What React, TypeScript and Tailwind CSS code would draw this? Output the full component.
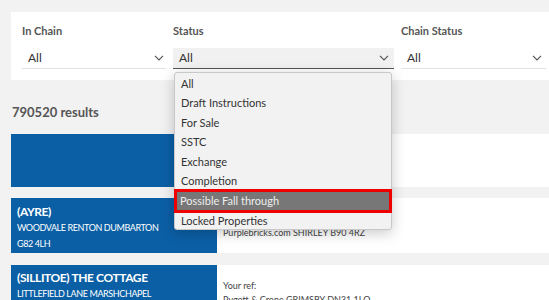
import React from "react";

const Chevron = () => (
  <svg width="10" height="6" viewBox="0 0 10 6" fill="none" className="shrink-0">
    <path d="M1 0.8 L5 4.8 L9 0.8" stroke="#555" strokeWidth="1.2" />
  </svg>
);

const items = [
  "All",
  "Draft Instructions",
  "For Sale",
  "SSTC",
  "Exchange",
  "Completion",
  "Possible Fall through",
  "Locked Properties",
];

export default function App() {
  return (
    <div
      className="relative w-[549px] h-[300px] overflow-hidden bg-[#f2f2f2] text-[#333]"
      style={{ fontFamily: "Lato, 'Open Sans', sans-serif" }}
    >
      <div className="pt-[12px] pl-[11px]">
        <div className="bg-white h-[68px] pt-[13px] pl-[11px] flex gap-[7px]">
          <div className="w-[144px] flex flex-col">
            <div className="text-[11px] font-bold text-[#555] h-[23px] leading-[11px]">In Chain</div>
            <div className="h-[21px] border-b border-[#e2e2e2] flex items-center justify-between pl-[6px] pr-[2px] text-[12px]">
              <span>All</span>
              <Chevron />
            </div>
          </div>
          <div className="w-[221px] flex flex-col">
            <div className="text-[11px] font-bold text-[#555] h-[23px] leading-[11px]">Status</div>
            <div className="h-[21px] bg-[#f1f1f1] border-b border-[#555] flex items-center justify-between pl-[6px] pr-[5px] text-[12px]">
              <span>All</span>
              <Chevron />
            </div>
          </div>
          <div className="w-[145px] flex flex-col">
            <div className="text-[11px] font-bold text-[#555] h-[23px] leading-[11px]">Chain Status</div>
            <div className="h-[21px] border-b border-[#e2e2e2] flex items-center justify-between pl-[6px] pr-[4px] text-[12px]">
              <span>All</span>
              <Chevron />
            </div>
          </div>
        </div>

        <div className="h-[54px] pt-[24px] text-[13px] leading-[16px] font-bold text-[#555] pl-[1px]">
          790520 results
        </div>

        <div className="flex h-[53px]">
          <div className="w-[206px] bg-[#0b5fa5]" />
          <div className="flex-1 bg-white" />
        </div>

        <div className="flex h-[55px] mt-[11px]">
          <div className="w-[206px] bg-[#0b5fa5] text-white pl-[6px] pt-[6px]">
            <div className="text-[12px] tracking-[-0.4px] font-bold leading-[16px]">(AYRE)</div>
            <div className="text-[9px] tracking-[-0.4px] leading-[16px]">WOODVALE RENTON DUMBARTON</div>
            <div className="text-[9px] tracking-[-0.4px] leading-[16px]">G82 4LH</div>
          </div>
          <div className="flex-1 bg-white pl-[6px] pt-[28px] text-[9px] text-[#444] leading-[14px]">
            Purplebricks.com SHIRLEY B90 4RZ
          </div>
        </div>

        <div className="flex h-[60px] mt-[12px]">
          <div className="w-[206px] bg-[#0b5fa5] text-white pl-[6px] pt-[4px]">
            <div className="text-[12px] tracking-[-0.4px] font-bold leading-[17px]">(SILLITOE) THE COTTAGE</div>
            <div className="text-[9px] tracking-[-0.4px] leading-[16px]">LITTLEFIELD LANE MARSHCHAPEL</div>
          </div>
          <div className="flex-1 bg-white pl-[6px] pt-[14px] text-[9px] text-[#444] leading-[14px]">
            <div>Your ref:</div>
            <div>Pygott &amp; Crone GRIMSBY DN31 1LQ</div>
          </div>
        </div>
      </div>

      <div className="absolute left-[174px] top-[72px] w-[218px] h-[158px] bg-[#f2f2f2] border border-[#c8c8c8] rounded-[3px] shadow-[0_3px_14px_rgba(0,0,0,0.22)] pt-[1px] text-[11px] text-[#333]">
        {items.map((it) =>
          it === "Possible Fall through" ? (
            <div
              key={it}
              className="-mx-[1px] my-[-2px] border-[3px] border-[#ee0000] h-[24px]"
            >
              <div className="h-full bg-[#777] text-[#eee] pl-[3px] flex items-center">{it}</div>
            </div>
          ) : (
            <div key={it} className="h-[19.5px] pl-[6px] flex items-center">
              {it}
            </div>
          )
        )}
      </div>
    </div>
  );
}
